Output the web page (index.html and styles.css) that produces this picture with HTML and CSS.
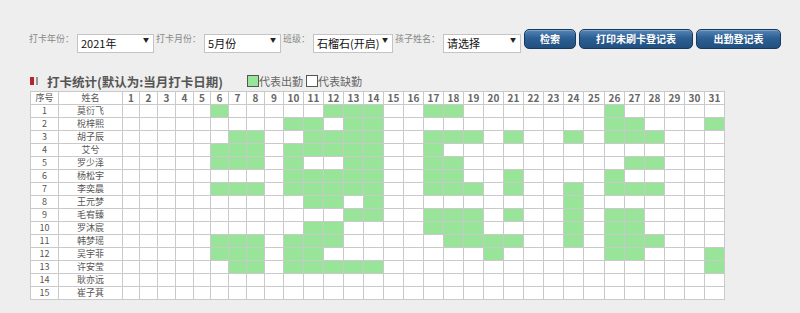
FILE: index.html
```html
<!DOCTYPE html>
<html>
	<head>
		<meta charset="utf-8">
		<title>打卡统计</title>
		<link rel="stylesheet" href="styles.css">
	</head>
	<body>
		<form class="toolbar">
			<label class="field">打卡年份：</label>
			<span class="select year"><select><option>2021年</option></select></span>
			<label class="field">打卡月份：</label>
			<span class="select month"><select><option>5月份</option></select></span>
			<label class="field">班级：</label>
			<span class="select klass"><select><option>石榴石(开启)</option></select></span>
			<label class="field">孩子姓名：</label>
			<span class="select kid"><select><option>请选择</option></select></span>
			<button type="button" class="btn search">检索</button>
			<button type="button" class="btn print">打印未刷卡登记表</button>
			<button type="button" class="btn record">出勤登记表</button>
		</form>
		<div class="stats-head">
			<h2 class="title"><span class="mark"></span>打卡统计(默认为:当月打卡日期)</h2>
			<span class="legend"><i class="swatch on"></i>代表出勤</span>
			<span class="legend"><i class="swatch"></i>代表缺勤</span>
		</div>
		<table class="grid" id="grid">
			<thead><tr><th class="no">序号</th><th class="name">姓名</th></tr></thead>
			<tbody></tbody>
		</table>
		<script>
			var kids = [
				['莫衍飞', [6,12,13,14,17,18,26]],
				['梲梓熙', [10,11,13,14,26,27,31]],
				['胡子辰', [7,8,11,12,13,14,17,18,19,21,24,26,27,28]],
				['艾兮', [6,7,8,10,11,12,13,14,17]],
				['罗少泽', [6,7,8,10,13,14,17,18,27,28]],
				['杨松宇', [10,11,12,13,14,17,18,21,26]],
				['李奕晨', [6,7,8,10,11,12,13,14,17,18,19,21,24,26,27,28]],
				['王元梦', [11,12,14,24]],
				['毛宥臻', [13,14,17,18,19,21,24,26,27]],
				['罗沐宸', [11,12,17,18,19,24,26,27]],
				['韩梦瑶', [6,7,8,10,11,12,18,19,20,21,24,26,27,28]],
				['吴宇菲', [6,7,8,10,11,20,26,27,31]],
				['许安莹', [7,8,10,11,12,13,14,31]],
				['耿亦远', []],
				['崔子萁', []]
			];
			// column widths in px, border not included
			var widths = [16,17,17,17,16,17,17,17,18];
			var grid = document.getElementById('grid'),
				head = grid.querySelector('thead tr'),
				body = grid.querySelector('tbody'),
				d, html;
			for (d = 1; d <= 31; d++) {
				head.insertAdjacentHTML('beforeend', '<th class="day" style="width:' + (widths[d - 1] || (d == 25 ? 20 : 19)) + 'px">' + d + '</th>');
			}
			kids.forEach(function(kid, n) {
				html = '<tr><td>' + (n + 1) + '</td><td>' + kid[0] + '</td>';
				for (d = 1; d <= 31; d++) {
					html += kid[1].indexOf(d) !== -1 ? '<td class="on"></td>' : '<td></td>';
				}
				body.insertAdjacentHTML('beforeend', html + '</tr>');
			});
		</script>
	</body>
</html>
```

FILE: styles.css
```css
body {
	margin: 0;
	background-color: #eeeeee;
	font-family: "Noto Sans CJK SC", "Noto Sans", sans-serif;
	color: #555555;
}

.toolbar {
	display: flex;
	align-items: center;
	padding: 29px 0 0 29px;
	height: 19px;
}
.field {
	font-size: 9px;
	color: #888888;
	margin-right: 3px;
	white-space: nowrap;
}
.select {
	position: relative;
	display: block;
	height: 19px;
	margin-right: 2px;
}
.select select {
	appearance: none;
	-webkit-appearance: none;
	box-sizing: border-box;
	width: 100%;
	height: 19px;
	margin: 0;
	padding: 0 0 0 3px;
	border: 1px solid #c4c4c4;
	background-color: #ffffff;
	font-family: inherit;
	font-size: 11px;
	color: #111111;
	outline: none;
}
.select:after {
	content: "▼";
	position: absolute;
	right: 5px;
	top: 6px;
	font-size: 6px;
	color: #222222;
	pointer-events: none;
}
.year, .month {
	width: 77px;
}
.klass {
	width: 80px;
}
.kid {
	width: 78px;
}

.btn {
	box-sizing: border-box;
	height: 20px;
	margin: 0 3px 0 1px;
	padding: 0;
	border: 1px solid #173a60;
	border-radius: 5px;
	background: linear-gradient(to bottom, #5585b8 0%, #2e5f93 45%, #21507f 100%);
	box-shadow: inset 0 1px 0 rgba(255, 255, 255, 0.25);
	color: #ffffff;
	font-family: inherit;
	font-size: 10px;
	font-weight: bold;
}
.search {
	width: 52px;
}
.print {
	width: 114px;
	margin-left: 0;
}
.record {
	width: 85px;
	margin-left: 0;
}

.stats-head {
	display: flex;
	align-items: center;
	height: 14px;
	margin: 26px 0 0 30px;
}
.title {
	display: flex;
	align-items: center;
	margin: 0 24px 0 0;
	font-size: 12.5px;
	font-weight: bold;
	color: #555555;
	white-space: nowrap;
}
.mark {
	display: inline-block;
	width: 8px;
	height: 8px;
	margin-right: 9px;
	background: linear-gradient(to right, #b5262c 0 4px, transparent 4px 6px, #999999 6px 8px);
}
.legend {
	display: flex;
	align-items: center;
	margin-right: 3px;
	font-size: 11px;
	color: #666666;
	white-space: nowrap;
}
.swatch {
	box-sizing: border-box;
	display: block;
	width: 12px;
	height: 12px;
	border: 1px solid #555555;
	background-color: #ffffff;
}
.swatch.on {
	background-color: #98e59a;
}

.grid {
	border-collapse: collapse;
	table-layout: fixed;
	margin: 3px 0 0 30px;
	background-color: #ffffff;
	font-size: 9px;
	color: #555555;
}
.grid th, .grid td {
	height: 12px;
	padding: 0;
	border: 1px solid #c9c9c9;
	line-height: 12px;
	text-align: center;
	white-space: nowrap;
	overflow: hidden;
}
.grid th {
	font-weight: normal;
}
.grid th.day {
	font-size: 10px;
	font-weight: bold;
	color: #666666;
}
.grid th.no {
	width: 27px;
}
.grid th.name {
	width: 63px;
}
.grid td.on {
	background-color: #98e59a;
}
```
